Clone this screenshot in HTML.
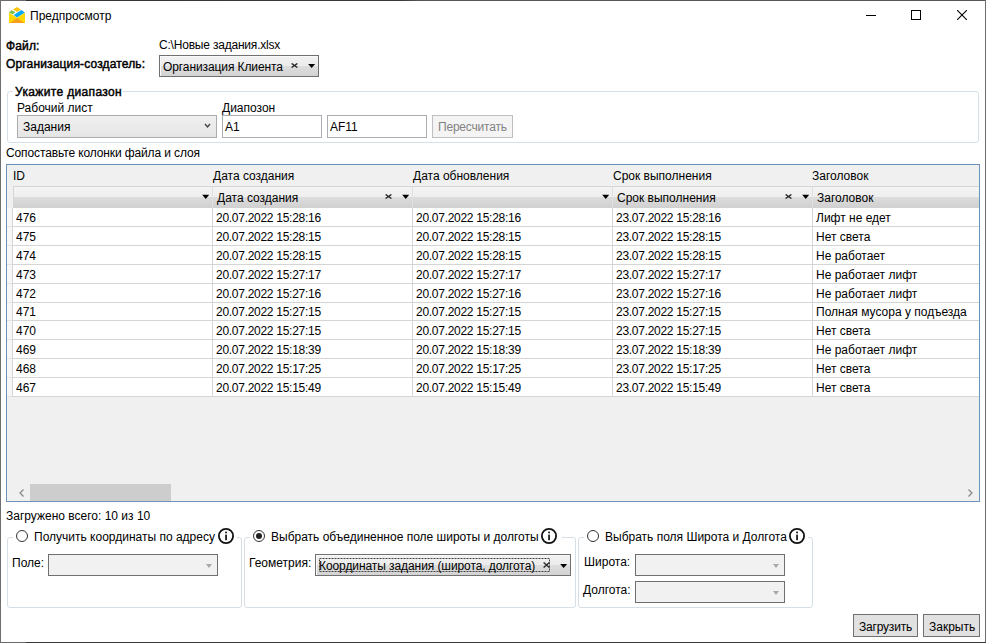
<!DOCTYPE html>
<html><head><meta charset="utf-8">
<style>
*{margin:0;padding:0;box-sizing:border-box}
html,body{width:986px;height:643px;overflow:hidden;background:#fff}
body{position:relative;font-family:"Liberation Sans",sans-serif;font-size:12px;color:#000}
.a{position:absolute}
.t{position:absolute;white-space:pre;line-height:14px}
.b{font-weight:normal;-webkit-text-stroke:0.45px #000;letter-spacing:0.15px}
.d{letter-spacing:-0.28px}
.combo{position:absolute;border:1px solid #acacac;background:linear-gradient(#f0f0f0,#e5e5e5)}
.wcombo{position:absolute;border:1px solid #707070;box-shadow:inset 1px 1px 0 #f9f9f9;background:linear-gradient(#f2f2f2 0%,#ebebeb 50%,#dddddd 50%,#d3d3d3 100%)}
.dcombo{position:absolute;border:1px solid #6f6f6f;background:#f1f1f1}
.tb{position:absolute;border:1px solid #abadb3;background:#fff}
.btn{position:absolute;border:1px solid #707070;background:#e1e1e1}
.grp{position:absolute;border:1px solid #d5dfe5;border-radius:3px}
.hl{position:absolute;height:1px;background:#d5d5d5}
.vl{position:absolute;width:1px;background:#d5d5d5}
.gar{position:absolute;width:0;height:0;border-left:3.5px solid transparent;border-right:3.5px solid transparent;border-top:4px solid #a8a8a8}
.bar{position:absolute;width:0;height:0;border-left:4px solid transparent;border-right:4px solid transparent;border-top:5px solid #000}
.radio{position:absolute;width:12px;height:12px;border:1px solid #333;border-radius:50%;background:#fff}
.info{position:absolute;width:16px;height:16px;border:2px solid #111;border-radius:50%;background:#fff}
.info i{position:absolute;left:5px;top:5px;width:2px;height:6px;background:#111}
.info i:before{content:"";position:absolute;left:0;top:-3px;width:2px;height:2px;background:#111}
</style></head><body>
<!-- window frame -->
<div class="a" style="left:0;top:0;width:986px;height:1px;background:linear-gradient(90deg,#6a6a6a 0,#6a6a6a 26px,#333 26px,#3a3a3a 400px,#555 420px,#555 100%)"></div>
<div class="a" style="left:0;top:0;width:1px;height:643px;background:#6e6e6e"></div>
<div class="a" style="left:985px;top:0;width:1px;height:643px;background:#6e6e6e"></div>
<div class="a" style="left:0;top:642px;width:986px;height:1px;background:linear-gradient(90deg,#6a6a6a 0,#6a6a6a 26px,#3a3a3a 26px,#3a3a3a 100%)"></div>

<!-- title -->
<svg class="a" style="left:9px;top:7px" width="16" height="16" viewBox="0 0 16 16">
 <path d="M0 5.4 L8 10.8 L16 5.4 V16 H0 Z" fill="#ffd800"/>
 <path d="M0.7 16 L8 11 L15.4 16 Z" fill="#f9a01b"/>
 <path d="M8 0.1 L11.9 2.5 L8 5 L4 2.5 Z" fill="#ffc20e"/>
 <path d="M0.1 5.4 L2.6 3.2 L6.4 5.3 L3.9 7.3 Z" fill="#7dbb42"/>
 <path d="M4.7 8 L12.4 3.1 L15.8 5.4 L8 10.5 Z" fill="#03a9f4"/>
</svg>
<div class="t" style="left:30px;top:9px">Предпросмотр</div>
<div class="a" style="left:866px;top:15px;width:10px;height:1px;background:#000"></div>
<div class="a" style="left:911px;top:10px;width:10px;height:10px;border:1px solid #000"></div>
<svg class="a" style="left:957px;top:10px" width="10" height="10" viewBox="0 0 10 10"><path d="M0 0 L10 10 M10 0 L0 10" stroke="#000" stroke-width="1.1"/></svg>

<!-- file / org -->
<div class="t b" style="left:6px;top:39px">Файл:</div>
<div class="t" style="left:159px;top:38px;letter-spacing:-0.2px">C:\Новые задания.xlsx</div>
<div class="t b" style="left:6px;top:57px">Организация-создатель:</div>
<div class="wcombo" style="left:159px;top:55px;width:160px;height:22px"></div>
<div class="t" style="left:163px;top:60px;letter-spacing:-0.1px">Организация Клиента</div>
<svg class="a" style="left:291px;top:63px" width="7" height="5"><path d="M0.6 0.5 L6.4 4.5 M6.4 0.5 L0.6 4.5" stroke="#2a2a2a" stroke-width="1.4"/></svg>
<svg class="a" style="left:308px;top:63px" width="8" height="6"><path d="M0.1 0.9 H7.1 L3.6 5.1 Z" fill="#000"/></svg>

<!-- range group -->
<div class="grp" style="left:7px;top:91px;width:972px;height:52px"></div>
<div class="a" style="left:13px;top:88px;width:110px;height:8px;background:#fff"></div>
<div class="t b" style="left:15px;top:85px;letter-spacing:0.35px">Укажите диапазон</div>
<div class="t" style="left:17px;top:101px">Рабочий лист</div>
<div class="combo" style="left:17px;top:115px;width:200px;height:23px"></div>
<div class="t" style="left:23px;top:120px">Задания</div>
<svg class="a" style="left:204px;top:123px" width="7" height="6"><path d="M1 1 L3.5 4 L6 1" stroke="#444" stroke-width="1.4" fill="none"/></svg>
<div class="t" style="left:222px;top:101px">Диапозон</div>
<div class="tb" style="left:222px;top:115px;width:100px;height:23px"></div>
<div class="t" style="left:225px;top:120px">A1</div>
<div class="tb" style="left:327px;top:115px;width:100px;height:23px"></div>
<div class="t" style="left:330px;top:120px">AF11</div>
<div class="btn" style="left:432px;top:115px;width:81px;height:23px;background:#f4f4f4;border-color:#bfbfbf"></div>
<div class="t" style="left:438px;top:120px;color:#838383;letter-spacing:-0.2px">Пересчитать</div>

<div class="t" style="left:6px;top:146px;letter-spacing:-0.12px">Сопоставьте колонки файла и слоя</div>

<!-- grid -->
<div class="a" style="left:6px;top:164px;width:974px;height:338px;border:1px solid #6f93b8;background:#f0f0f0"></div>
<!-- header texts -->
<div class="t" style="left:13px;top:169px">ID</div>
<div class="t" style="left:213px;top:169px">Дата создания</div>
<div class="t" style="left:413px;top:169px">Дата обновления</div>
<div class="t" style="left:613px;top:169px">Срок выполнения</div>
<div class="t" style="left:812px;top:169px">Заголовок</div>
<!-- filter row -->
<div class="a" style="left:13px;top:186px;width:966px;height:22px;border-top:1px solid #d5d5d5;border-left:1px solid #d5d5d5;background:linear-gradient(#f4f4f4 0,#eeeeee 48%,#dcdcdc 50%,#d0d0d0 100%)"></div>
<div class="vl" style="left:212px;top:186px;height:22px;background:#e0e0e0"></div>
<div class="vl" style="left:412px;top:186px;height:22px;background:#e0e0e0"></div>
<div class="vl" style="left:612px;top:186px;height:22px;background:#e0e0e0"></div>
<div class="vl" style="left:812px;top:186px;height:22px;background:#e0e0e0"></div>
<div class="t" style="left:217px;top:191px">Дата создания</div>
<div class="t" style="left:617px;top:191px">Срок выполнения</div>
<div class="t" style="left:817px;top:191px">Заголовок</div>
<svg class="a" style="left:202px;top:194px" width="8" height="6"><path d="M0.2 0.8 H7.2 L3.7 5 Z" fill="#000"/></svg>
<svg class="a" style="left:402px;top:194px" width="8" height="6"><path d="M0.2 0.8 H7.2 L3.7 5 Z" fill="#000"/></svg>
<svg class="a" style="left:602px;top:194px" width="8" height="6"><path d="M0.2 0.8 H7.2 L3.7 5 Z" fill="#000"/></svg>
<svg class="a" style="left:802px;top:194px" width="8" height="6"><path d="M0.2 0.8 H7.2 L3.7 5 Z" fill="#000"/></svg>
<svg class="a" style="left:385px;top:194px" width="7" height="5"><path d="M0.6 0.5 L6.4 4.5 M6.4 0.5 L0.6 4.5" stroke="#2a2a2a" stroke-width="1.4"/></svg>
<svg class="a" style="left:785px;top:194px" width="7" height="5"><path d="M0.6 0.5 L6.4 4.5 M6.4 0.5 L0.6 4.5" stroke="#2a2a2a" stroke-width="1.4"/></svg>
<!-- data -->
<div class="a" style="left:12px;top:208px;width:967px;height:189px;background:#fff"></div>
<div class="a" style="left:7px;top:208px;width:5px;height:189px;background:#f7f7f7"></div>
<div class="vl" style="left:12px;top:208px;height:189px"></div>
<div class="vl" style="left:212px;top:208px;height:189px"></div>
<div class="vl" style="left:412px;top:208px;height:189px"></div>
<div class="vl" style="left:612px;top:208px;height:189px"></div>
<div class="vl" style="left:812px;top:208px;height:189px"></div>
<div class="t" style="left:16px;top:211px">476</div>
<div class="t d" style="left:216px;top:211px">20.07.2022 15:28:16</div>
<div class="t d" style="left:416px;top:211px">20.07.2022 15:28:16</div>
<div class="t d" style="left:616px;top:211px">23.07.2022 15:28:16</div>
<div class="t" style="left:816px;top:211px">Лифт не едет</div>
<div class="t" style="left:16px;top:230px">475</div>
<div class="t d" style="left:216px;top:230px">20.07.2022 15:28:15</div>
<div class="t d" style="left:416px;top:230px">20.07.2022 15:28:15</div>
<div class="t d" style="left:616px;top:230px">23.07.2022 15:28:15</div>
<div class="t" style="left:816px;top:230px">Нет света</div>
<div class="t" style="left:16px;top:249px">474</div>
<div class="t d" style="left:216px;top:249px">20.07.2022 15:28:15</div>
<div class="t d" style="left:416px;top:249px">20.07.2022 15:28:15</div>
<div class="t d" style="left:616px;top:249px">23.07.2022 15:28:15</div>
<div class="t" style="left:816px;top:249px">Не работает</div>
<div class="t" style="left:16px;top:268px">473</div>
<div class="t d" style="left:216px;top:268px">20.07.2022 15:27:17</div>
<div class="t d" style="left:416px;top:268px">20.07.2022 15:27:17</div>
<div class="t d" style="left:616px;top:268px">23.07.2022 15:27:17</div>
<div class="t" style="left:816px;top:268px">Не работает лифт</div>
<div class="t" style="left:16px;top:287px">472</div>
<div class="t d" style="left:216px;top:287px">20.07.2022 15:27:16</div>
<div class="t d" style="left:416px;top:287px">20.07.2022 15:27:16</div>
<div class="t d" style="left:616px;top:287px">23.07.2022 15:27:16</div>
<div class="t" style="left:816px;top:287px">Не работает лифт</div>
<div class="t" style="left:16px;top:305px">471</div>
<div class="t d" style="left:216px;top:305px">20.07.2022 15:27:15</div>
<div class="t d" style="left:416px;top:305px">20.07.2022 15:27:15</div>
<div class="t d" style="left:616px;top:305px">23.07.2022 15:27:15</div>
<div class="t" style="left:816px;top:305px">Полная мусора у подъезда</div>
<div class="t" style="left:16px;top:324px">470</div>
<div class="t d" style="left:216px;top:324px">20.07.2022 15:27:15</div>
<div class="t d" style="left:416px;top:324px">20.07.2022 15:27:15</div>
<div class="t d" style="left:616px;top:324px">23.07.2022 15:27:15</div>
<div class="t" style="left:816px;top:324px">Нет света</div>
<div class="t" style="left:16px;top:343px">469</div>
<div class="t d" style="left:216px;top:343px">20.07.2022 15:18:39</div>
<div class="t d" style="left:416px;top:343px">20.07.2022 15:18:39</div>
<div class="t d" style="left:616px;top:343px">23.07.2022 15:18:39</div>
<div class="t" style="left:816px;top:343px">Не работает лифт</div>
<div class="t" style="left:16px;top:362px">468</div>
<div class="t d" style="left:216px;top:362px">20.07.2022 15:17:25</div>
<div class="t d" style="left:416px;top:362px">20.07.2022 15:17:25</div>
<div class="t d" style="left:616px;top:362px">23.07.2022 15:17:25</div>
<div class="t" style="left:816px;top:362px">Нет света</div>
<div class="t" style="left:16px;top:381px">467</div>
<div class="t d" style="left:216px;top:381px">20.07.2022 15:15:49</div>
<div class="t d" style="left:416px;top:381px">20.07.2022 15:15:49</div>
<div class="t d" style="left:616px;top:381px">23.07.2022 15:15:49</div>
<div class="t" style="left:816px;top:381px">Нет света</div>
<div class="hl" style="left:12px;top:226px;width:967px"></div>
<div class="hl" style="left:7px;top:226px;width:5px;background:#e2e2e2"></div>
<div class="hl" style="left:12px;top:245px;width:967px"></div>
<div class="hl" style="left:7px;top:245px;width:5px;background:#e2e2e2"></div>
<div class="hl" style="left:12px;top:264px;width:967px"></div>
<div class="hl" style="left:7px;top:264px;width:5px;background:#e2e2e2"></div>
<div class="hl" style="left:12px;top:283px;width:967px"></div>
<div class="hl" style="left:7px;top:283px;width:5px;background:#e2e2e2"></div>
<div class="hl" style="left:12px;top:302px;width:967px"></div>
<div class="hl" style="left:7px;top:302px;width:5px;background:#e2e2e2"></div>
<div class="hl" style="left:12px;top:320px;width:967px"></div>
<div class="hl" style="left:7px;top:320px;width:5px;background:#e2e2e2"></div>
<div class="hl" style="left:12px;top:339px;width:967px"></div>
<div class="hl" style="left:7px;top:339px;width:5px;background:#e2e2e2"></div>
<div class="hl" style="left:12px;top:358px;width:967px"></div>
<div class="hl" style="left:7px;top:358px;width:5px;background:#e2e2e2"></div>
<div class="hl" style="left:12px;top:377px;width:967px"></div>
<div class="hl" style="left:7px;top:377px;width:5px;background:#e2e2e2"></div>
<div class="hl" style="left:12px;top:396px;width:967px"></div>
<div class="hl" style="left:7px;top:396px;width:5px;background:#e2e2e2"></div><!-- scrollbar -->
<svg class="a" style="left:19px;top:489px" width="5" height="8"><path d="M4.5 0.5 L1 4 L4.5 7.5" stroke="#858585" stroke-width="1.2" fill="none"/></svg>
<div class="a" style="left:30px;top:484px;width:141px;height:17px;background:#cdcdcd"></div>
<svg class="a" style="left:968px;top:489px" width="5" height="8"><path d="M0.5 0.5 L4 4 L0.5 7.5" stroke="#858585" stroke-width="1.2" fill="none"/></svg>

<div class="t" style="left:6px;top:509px">Загружено всего: 10 из 10</div>

<!-- bottom groups -->
<div class="grp" style="left:7px;top:537px;width:235px;height:71px"></div>
<div class="grp" style="left:244px;top:537px;width:332px;height:71px"></div>
<div class="grp" style="left:578px;top:537px;width:235px;height:71px"></div>
<div class="a" style="left:13px;top:528px;width:224px;height:16px;background:#fff"></div>
<div class="a" style="left:250px;top:528px;width:312px;height:16px;background:#fff"></div>
<div class="a" style="left:584px;top:528px;width:224px;height:16px;background:#fff"></div>

<div class="radio" style="left:16px;top:530px"></div>
<div class="t" style="left:34px;top:530px">Получить координаты по адресу</div>
<svg class="a" style="left:218px;top:528px" width="16" height="16" viewBox="0 0 16 16"><circle cx="8" cy="8" r="7.1" fill="#fff" stroke="#111" stroke-width="1.8"/><rect x="7.2" y="6.6" width="1.7" height="5.6" fill="#111"/><rect x="7.2" y="3.6" width="1.7" height="1.7" fill="#111"/></svg>
<div class="t" style="left:12px;top:556px">Поле:</div>
<div class="dcombo" style="left:48px;top:554px;width:170px;height:22px"></div>
<div class="gar" style="left:206px;top:564px"></div>

<div class="radio" style="left:253px;top:530px"></div>
<div class="a" style="left:256px;top:533px;width:6px;height:6px;border-radius:50%;background:#222"></div>
<div class="t" style="left:271px;top:530px">Выбрать объединенное поле широты и долготы</div>
<svg class="a" style="left:541px;top:528px" width="16" height="16" viewBox="0 0 16 16"><circle cx="8" cy="8" r="7.1" fill="#fff" stroke="#111" stroke-width="1.8"/><rect x="7.2" y="6.6" width="1.7" height="5.6" fill="#111"/><rect x="7.2" y="3.6" width="1.7" height="1.7" fill="#111"/></svg>
<div class="t" style="left:249px;top:556px">Геометрия:</div>
<div class="wcombo" style="left:315px;top:554px;width:256px;height:22px"></div>
<svg class="a" style="left:319px;top:558px" width="231" height="14"><rect x="0.5" y="0.5" width="230" height="13" fill="none" stroke="#444" stroke-dasharray="2 1"/></svg>
<div class="t" style="left:319px;top:559px;letter-spacing:-0.08px">Координаты задания (широта, долгота)</div>
<svg class="a" style="left:543px;top:562px" width="7" height="6"><path d="M0.6 0.5 L6.4 5.5 M6.4 0.5 L0.6 5.5" stroke="#2a2a2a" stroke-width="1.4"/></svg>
<svg class="a" style="left:560px;top:563px" width="8" height="6"><path d="M0.1 0.9 H7.1 L3.6 5.1 Z" fill="#000"/></svg>

<div class="radio" style="left:587px;top:530px"></div>
<div class="t" style="left:605px;top:530px">Выбрать поля Широта и Долгота</div>
<svg class="a" style="left:789px;top:528px" width="16" height="16" viewBox="0 0 16 16"><circle cx="8" cy="8" r="7.1" fill="#fff" stroke="#111" stroke-width="1.8"/><rect x="7.2" y="6.6" width="1.7" height="5.6" fill="#111"/><rect x="7.2" y="3.6" width="1.7" height="1.7" fill="#111"/></svg>
<div class="t" style="left:584px;top:555px">Широта:</div>
<div class="dcombo" style="left:635px;top:554px;width:150px;height:22px"></div>
<div class="gar" style="left:773px;top:564px"></div>
<div class="t" style="left:583px;top:583px">Долгота:</div>
<div class="dcombo" style="left:635px;top:581px;width:150px;height:22px"></div>
<div class="gar" style="left:773px;top:591px"></div>

<div class="btn" style="left:853px;top:614px;width:65px;height:23px"></div>
<div class="t" style="left:859px;top:620px;letter-spacing:-0.2px">Загрузить</div>
<div class="btn" style="left:923px;top:614px;width:57px;height:23px"></div>
<div class="t" style="left:929px;top:620px">Закрыть</div>
</body></html>
